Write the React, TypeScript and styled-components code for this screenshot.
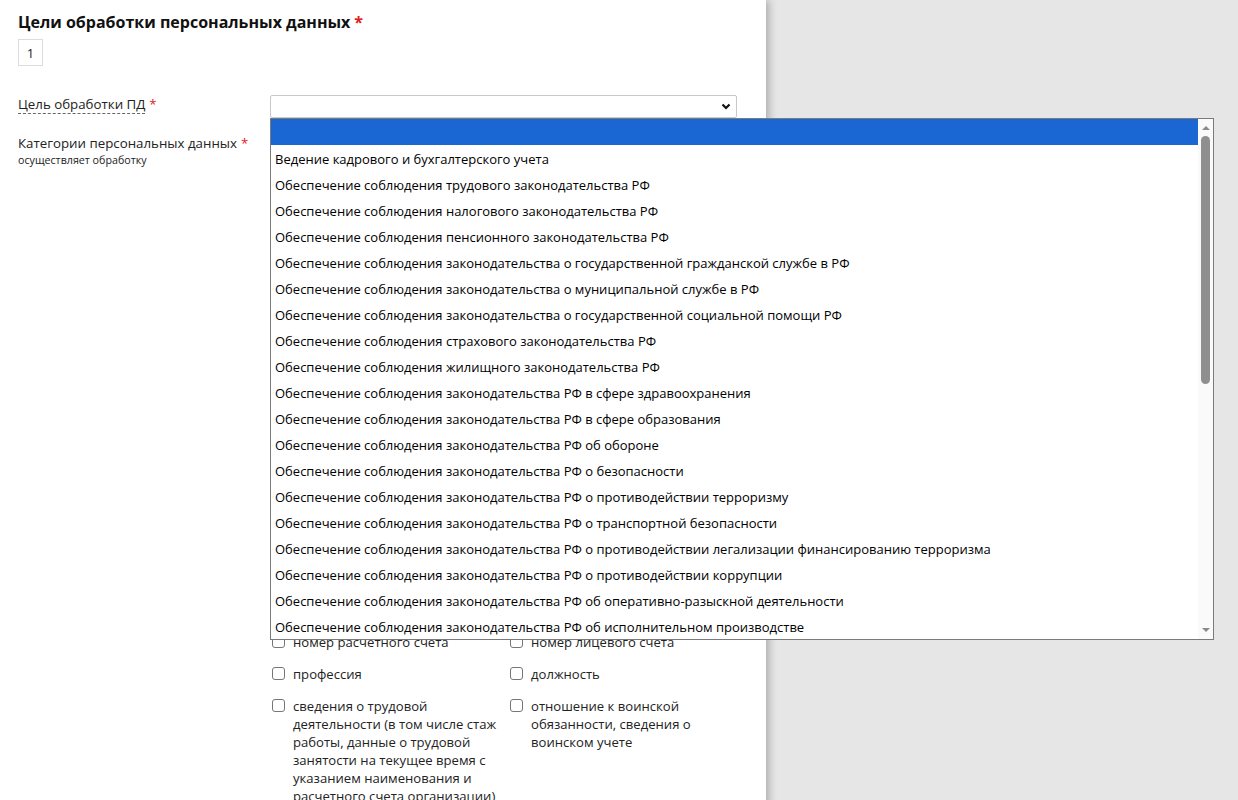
import React from "react";
import styled, { createGlobalStyle } from "styled-components";

const GlobalStyle = createGlobalStyle`
  html, body {
    margin: 0;
    padding: 0;
    background: #e6e6e6;
    font-family: "Open Sans", "Noto Sans", sans-serif;
    color: #1a1a1a;
    overflow: hidden;
  }
`;

const purposes = [
  "",
  "Ведение кадрового и бухгалтерского учета",
  "Обеспечение соблюдения трудового законодательства РФ",
  "Обеспечение соблюдения налогового законодательства РФ",
  "Обеспечение соблюдения пенсионного законодательства РФ",
  "Обеспечение соблюдения законодательства о государственной гражданской службе в РФ",
  "Обеспечение соблюдения законодательства о муниципальной службе в РФ",
  "Обеспечение соблюдения законодательства о государственной социальной помощи РФ",
  "Обеспечение соблюдения страхового законодательства РФ",
  "Обеспечение соблюдения жилищного законодательства РФ",
  "Обеспечение соблюдения законодательства РФ в сфере здравоохранения",
  "Обеспечение соблюдения законодательства РФ в сфере образования",
  "Обеспечение соблюдения законодательства РФ об обороне",
  "Обеспечение соблюдения законодательства РФ о безопасности",
  "Обеспечение соблюдения законодательства РФ о противодействии терроризму",
  "Обеспечение соблюдения законодательства РФ о транспортной безопасности",
  "Обеспечение соблюдения законодательства РФ о противодействии легализации финансированию терроризма",
  "Обеспечение соблюдения законодательства РФ о противодействии коррупции",
  "Обеспечение соблюдения законодательства РФ об оперативно-разыскной деятельности",
  "Обеспечение соблюдения законодательства РФ об исполнительном производстве",
];

// the first rows sit under the open list
const categories = [
  "фамилия, имя, отчество",
  "год рождения",
  "месяц рождения",
  "дата рождения",
  "место рождения",
  "адрес",
  "семейное положение",
  "социальное положение",
  "имущественное положение",
  "образование",
  "доходы",
  "пол",
  "гражданство",
  "данные документа, удостоверяющего личность",
  "ИНН",
  "СНИЛС",
  "номер телефона",
  "адрес электронной почты",
  "сведения о детях",
  "сведения о родственниках",
  "фотография",
  "подпись",
  "состояние здоровья",
  "национальность",
  "данные полиса ОМС",
  "адрес регистрации",
  "сведения о судимости",
  "ученая степень",
  "номер банковской карты",
  "реквизиты банка",
  "номер расчетного счета",
  "номер лицевого счета",
  "профессия",
  "должность",
  "сведения о трудовой деятельности (в том числе стаж работы, данные о трудовой занятости на текущее время с указанием наименования и расчетного счета организации)",
  "отношение к воинской обязанности, сведения о воинском учете",
];

const Panel = styled.div`
  width: 719px;
  min-height: 100vh;
  padding: 10px 29px 0 18px;
  background: #fff;
  box-shadow: 3px 0 8px rgba(0, 0, 0, 0.25);
`;

const Title = styled.h2`
  margin: 0;
  font-size: 16px;
  line-height: 24px;
  font-weight: 700;
  color: #111;
`;

const Star = styled.span`
  color: #e21b1b;
  margin-left: 4px;
`;

const NumberTab = styled.div`
  margin-top: 5px;
  width: 25px;
  height: 27px;
  box-sizing: border-box;
  border: 1px solid #dcdcdc;
  display: flex;
  align-items: center;
  justify-content: center;
  font-size: 13px;
  color: #222;
`;

const FormRow = styled.div<{ $top: number }>`
  display: grid;
  grid-template-columns: 252px 1fr;
  margin-top: ${({ $top }) => $top}px;
`;

const Label = styled.div`
  font-size: 13.3px;
  line-height: 18px;
  color: #222;
`;

const Hint = styled.span`
  border-bottom: 1px dashed #666;
`;

const SubLabel = styled.div`
  font-size: 10.7px;
  line-height: 16px;
  color: #222;
`;

const SelectWrap = styled.div`
  position: relative;
`;

const SelectBox = styled.div`
  height: 23px;
  box-sizing: border-box;
  border: 1px solid #c8c8c8;
  border-radius: 2px;
  background: #fff;
  display: flex;
  align-items: center;
  justify-content: flex-end;
  padding-right: 5px;
`;

const ListBox = styled.div`
  position: absolute;
  top: 23px;
  left: 0;
  width: 944px;
  height: 522px;
  box-sizing: border-box;
  border: 1px solid #7a7a7a;
  background: #fff;
  display: flex;
  z-index: 10;
`;

const Options = styled.div`
  flex: 1;
  overflow: hidden;
`;

const Option = styled.div<{ $active?: boolean }>`
  height: 26px;
  box-sizing: border-box;
  padding: 2px 0 0 4px;
  line-height: 24px;
  font-size: 13px;
  color: #000;
  white-space: nowrap;
  background: ${({ $active }) => ($active ? "#1a67d3" : "#fff")};
`;

const Scrollbar = styled.div`
  width: 15px;
  background: #fafafa;
  display: flex;
  flex-direction: column;
  align-items: center;
`;

const Arrow = styled.div<{ $down?: boolean }>`
  width: 0;
  height: 0;
  margin: ${({ $down }) => ($down ? "auto 0 7px" : "7px 0 0")};
  border-left: 4px solid transparent;
  border-right: 4px solid transparent;
  ${({ $down }) =>
    $down ? "border-top: 4px solid #8a8a8a;" : "border-bottom: 4px solid #8a8a8a;"}
`;

const Thumb = styled.div`
  margin-top: 6px;
  width: 9px;
  height: 248px;
  border-radius: 5px;
  background: #8f8f8f;
`;

const CheckGrid = styled.div`
  display: grid;
  grid-template-columns: 238px 238px;
  row-gap: 14px;
  padding: 1px 0 0 2px;
`;

const CheckItem = styled.label`
  display: flex;
  gap: 8px;
  font-size: 13.1px;
  line-height: 18px;
  color: #222;
`;

const Box = styled.span`
  flex: none;
  width: 13px;
  height: 13px;
  margin-top: 2px;
  box-sizing: border-box;
  border: 1px solid #767676;
  border-radius: 3px;
  background: #fff;
`;

const Chevron = () => (
  <svg width="10" height="7" viewBox="0 0 10 7">
    <polyline points="1.5,1.5 5,5 8.5,1.5" fill="none" stroke="#111" strokeWidth="2.2" />
  </svg>
);

export default function App() {
  return (
    <>
      <GlobalStyle />
      <Panel>
        <Title>
          Цели обработки персональных данных<Star>*</Star>
        </Title>
        <NumberTab>1</NumberTab>

        <FormRow $top={29}>
          <Label>
            <Hint>Цель обработки ПД</Hint>
            <Star>*</Star>
          </Label>
          <SelectWrap>
            <SelectBox>
              <Chevron />
            </SelectBox>
            <ListBox>
              <Options>
                {purposes.map((p, i) => (
                  <Option key={i} $active={i === 0}>
                    {p}
                  </Option>
                ))}
              </Options>
              <Scrollbar>
                <Arrow />
                <Thumb />
                <Arrow $down />
              </Scrollbar>
            </ListBox>
          </SelectWrap>
        </FormRow>

        <FormRow $top={16}>
          <div>
            <Label>
              Категории персональных данных<Star>*</Star>
            </Label>
            <SubLabel>осуществляет обработку</SubLabel>
          </div>
          <CheckGrid>
            {categories.map((c) => (
              <CheckItem key={c}>
                <Box />
                <span>{c}</span>
              </CheckItem>
            ))}
          </CheckGrid>
        </FormRow>
      </Panel>
    </>
  );
}
